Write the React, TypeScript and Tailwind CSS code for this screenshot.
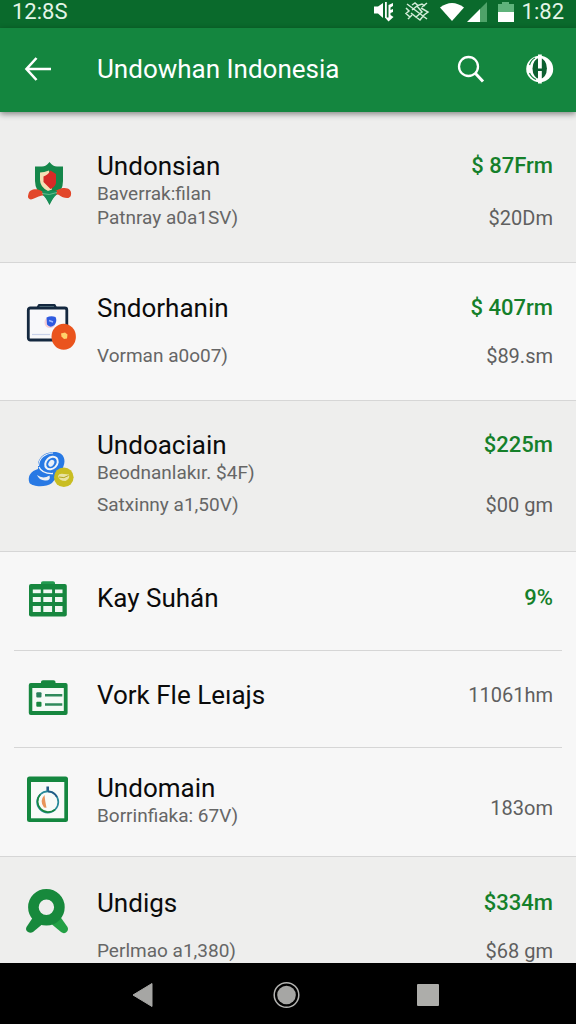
import type { ReactNode } from 'react';
import { clsx } from 'clsx';

type Item = {
  title: string;
  lines: string[];
  amount?: string;
  detail?: string;
  icon: ReactNode;
  // vertical rhythm of the row
  row: string;
  iconClass?: string;
  linesClass?: string;
  sideClass?: string;
  shaded?: boolean;
  inset?: boolean;
};

const iconBox = 'h-12 w-12 shrink-0 overflow-visible';

function ShieldIcon() {
  return (
    <svg viewBox="0 0 48 48" className={iconBox} aria-hidden="true">
      <path d="M25.5 4 Q29 8.500 33 8.500 L39 8.500 V23 Q39 34 30 38.500 L25.500 47 L21 38.500 Q11 34 11 23 V8.500 L18 8.500 Q22 8.500 25.500 4Z" fill="#14864a" />
      <path d="M25 12.500 Q20 14.500 16 14.500 V22 Q16 29 24 33 L28 31.500 Z" fill="#f5dfb6" />
      <path d="M26.500 12.500 L32 16 V25 Q31 29 26.500 31 L19.500 24 V18.500 Q24 17 26.500 12.500Z" fill="#d62a26" />
      <path d="M4.500 36 C5 32 10 30.500 14 31.500 C18 32.500 20 35.500 25 35 C30 34.500 31 32.500 37 30.500 C44 29 48 32 47 37 C46 42 39 40 35 37 C30 34.500 22 37.500 18 37.500 C13 38.500 10 41 7 41.500 C4 41 3.500 39 4.500 36Z" fill="#e2472b" />
      <path d="M18 33 H33 L31.500 37.500 L25.500 45 L19.500 37.500Z" fill="#17905a" />
      <path d="M18 35.500 Q25 38 33 34.500" fill="none" stroke="#7ec69d" strokeWidth="0.8" />
    </svg>
  );
}

function CaseIcon() {
  return (
    <svg viewBox="0 0 48 48" className={iconBox} aria-hidden="true">
      <path d="M13.500 4 L15 1 H30.500 L32 4" fill="#7fa0a8" stroke="#14283f" strokeWidth="2.2" strokeLinejoin="round" />
      <rect x="4.300" y="4" width="38.500" height="32" rx="2" fill="#f8f8fa" stroke="#14283f" strokeWidth="2.8" />
      <path d="M8 30.500 H26" stroke="#c9d2ea" strokeWidth="1.200" />
      <circle cx="26" cy="18.500" r="5.500" fill="#f6cfd6" />
      <path d="M22.500 13.500 Q27 11.500 31.500 13 Q33.500 17 30.500 21 Q26 24.500 23 20.500Z" fill="#2f5be0" />
      <path d="M25 16.500 l4 1.500" stroke="#9db8ff" strokeWidth="1.500" />
      <ellipse cx="39.700" cy="32.800" rx="12.200" ry="13" fill="#ea541d" />
      <path d="M37 29.500 L41 28.500 L43.500 30.500 L43 34.500 L40 35 L37.500 32.500Z" fill="#ffd36b" />
    </svg>
  );
}

function RingsIcon() {
  return (
    <svg viewBox="0 0 48 48" className={iconBox} aria-hidden="true">
      <path d="M14 14 C16 6 23 2.500 32 3 C40 4 42 11 39.500 17 C38 24 33 28 28 34 C22 38.500 9 38 5.500 34 C3 27 7 22 14 20Z" fill="#2879e4" />
      <path d="M14.500 17 C15 9 21 4.500 29 4" fill="none" stroke="#f2f4f7" strokeWidth="1.100" />
      <ellipse cx="27.500" cy="14" rx="7" ry="5.500" transform="rotate(-45 27.500 14)" fill="#2879e4" stroke="#f2f4f7" strokeWidth="2" />
      <ellipse cx="27.300" cy="14.300" rx="2.600" ry="3.600" transform="rotate(35 27.300 14.300)" fill="#e8eef7" />
      <path d="M15 18 Q18 25 29 24.500" fill="none" stroke="#f2f4f7" strokeWidth="1.300" />
      <path d="M13 26 Q19 30.500 25.500 26.500 Q27 32 21 31.500 Q15 31 13 26Z" fill="#eef1f4" />
      <circle cx="39.800" cy="28.300" r="9.800" fill="#c9bd22" />
      <path d="M34 27 Q35 24 40 25 L45 25.500 Q46 30 41.500 32 Q35 32 34 27Z" fill="#e9e3a2" />
      <path d="M35 28 Q40 30 44.500 26.500" fill="none" stroke="#b2a51c" strokeWidth="1" />
    </svg>
  );
}

function TableIcon() {
  return (
    <svg viewBox="0 0 48 48" className={iconBox} aria-hidden="true">
      <path d="M17 11 V9 Q17 7.300 19 7.300 H29 Q31 7.300 31 9 V11Z" fill="#239a50" />
      <rect x="5" y="10" width="37.800" height="32.500" rx="2" fill="#17873f" />
      {[
        [15.5, 3.7],
        [23, 5],
        [32, 6],
      ].map(([y, h]) => (
        <g key={y} fill="#f1f8f2">
          <rect x="8.800" y={y} width="8" height={h} />
          <rect x="19.300" y={y} width="8.800" height={h} />
          <rect x="31" y={y} width="7.500" height={h} />
        </g>
      ))}
    </svg>
  );
}

function ChecklistIcon() {
  return (
    <svg viewBox="0 0 48 48" className={iconBox} aria-hidden="true">
      <path d="M17 13 V11 Q17 9.200 19 9.200 H29.500 Q31.500 9.200 31.500 11 V13Z" fill="#17873f" />
      <rect x="4.800" y="12" width="38.800" height="32" rx="2" fill="#17873f" />
      <rect x="8.300" y="17" width="31.500" height="23" fill="#f5faf6" />
      <rect x="12.300" y="21.300" width="5.200" height="5.200" rx="1" fill="#2a7f5c" />
      <rect x="12.300" y="30.800" width="5.200" height="5" rx="1" fill="#17873f" />
      <path d="M21 24.300 H38.300 M21 33.500 H38.300" stroke="#2f8a5b" strokeWidth="2.600" />
    </svg>
  );
}

function FrameIcon() {
  return (
    <svg viewBox="0 0 48 48" className={iconBox} aria-hidden="true">
      <rect x="3" y="0.500" width="41" height="45.500" rx="2.500" fill="#14873f" />
      <rect x="7" y="6" width="33.300" height="36.300" fill="#f8faf8" />
      <path d="M23.700 10.500 V15.500" stroke="#245a86" strokeWidth="2.600" />
      <circle cx="23.700" cy="26" r="10.600" fill="none" stroke="#27899a" strokeWidth="1.700" />
      <path d="M16.200 18.500 A10.600 10.600 0 0 0 31 33.600" fill="none" stroke="#17873f" strokeWidth="1.700" />
      <path d="M23.700 15.400 A10.600 10.600 0 0 1 33 21" fill="none" stroke="#245a86" strokeWidth="1.700" />
      <path d="M20.500 19 Q15 25 20 31.500 L22.500 31.800 Q21 25 20.500 19Z" fill="#e8935a" />
    </svg>
  );
}

function PersonIcon() {
  return (
    <svg viewBox="0 0 48 48" className={iconBox} aria-hidden="true">
      <path d="M10.500 28 L2.500 40 Q1 43 4 45 Q6.500 46.500 9 45 L18 37.500Z" fill="#17893c" />
      <path d="M35 28 L43.500 40 Q45 43 42 45.500 Q39.500 47 37 45 L28 37.500Z" fill="#23a045" />
      <circle cx="22.400" cy="20.300" r="13" fill="none" stroke="#17893c" strokeWidth="10.600" />
    </svg>
  );
}

const items: Item[] = [
  {
    title: 'Undonsian',
    lines: ['Baverrak:filan', 'Patnray a0a1SV)'],
    amount: '$ 87Frm',
    detail: '$20Dm',
    icon: <ShieldIcon />,
    row: 'pt-[38px] pb-8',
    iconClass: 'self-start pt-2',
    shaded: true,
  },
  {
    title: 'Sndorhanin',
    lines: ['Vorman a0o07)'],
    amount: '$ 407rm',
    detail: '$89.sm',
    icon: <CaseIcon />,
    row: 'pt-[29px] pb-8',
    iconClass: 'self-start pt-3',
    linesClass: 'pt-5',
  },
  {
    title: 'Undoaciain',
    lines: ['Beodnanlakır. $4F)', 'Satxinny a1,50V)'],
    amount: '$225m',
    detail: '$00 gm',
    icon: <RingsIcon />,
    row: 'pt-7 pb-[34px]',
    linesClass: 'gap-2',
    shaded: true,
  },
  {
    title: 'Kay Suhán',
    lines: [],
    amount: '9%',
    icon: <TableIcon />,
    row: 'pt-[22px] pb-7',
    inset: true,
  },
  {
    title: 'Vork Fle Leıajs',
    lines: [],
    detail: '11061hm',
    icon: <ChecklistIcon />,
    row: 'pt-5 pb-7',
    inset: true,
  },
  {
    title: 'Undomain',
    lines: ['Borrinfiaka: 67V)'],
    detail: '183om',
    icon: <FrameIcon />,
    row: 'pt-6 pb-7',
    sideClass: 'pb-2',
  },
  {
    title: 'Undigs',
    lines: ['Perlmao a1,380)'],
    amount: '$334m',
    detail: '$68 gm',
    icon: <PersonIcon />,
    row: 'pt-[30px] pb-8',
    iconClass: 'self-start',
    linesClass: 'pt-5',
    shaded: true,
  },
];

function StatusBar() {
  return (
    <div className="flex h-7 shrink-0 items-center justify-between bg-[#0a6a2c] px-3 pb-1 text-[22px] leading-6 text-[#e4f5e8]">
      <span>12:8S</span>
      <div className="flex items-center">
        <svg viewBox="0 0 140 24" className="mr-2 h-6 w-[140px]" aria-hidden="true">
          {/* muted speaker */}
          <path d="M0 6.500 H4 L9 3 V18 L4 13.500 H0Z M11 2 h1.800 v16 h-1.800Z M14.500 5 L19 3 V6 L16.500 7.500 V10 L19 9 V12 L16.500 13 V15 L19.500 17 L14.500 21.500 L11 17.500 H14.500Z" fill="#fff" />
          {/* vibrate off */}
          <path
            d="M33 4 L53 19 M32 8 L35 11 L32 13.500 L36 17 M38 5 L41 3 L44 5.500 L48 4 L51 6 M47 8 L54 12 L50 15 L46 20 L42 17 M38 10 L43 6 L48 12 L42 17 L37 13 M34 19 L38 15 M48 7 L53 3"
            fill="none"
            stroke="#d3ecd9"
            strokeWidth="1.500"
          />
          <path d="M66 7.500 Q78 -1.500 90 7.500 L78 21Z" fill="#fff" />
          <path d="M113 2 V22 H106 V9Z" fill="#4fa269" />
          <path d="M106 9 V22 H93Z" fill="#fff" />
          <path d="M128 2 H135 V4 H140 V12 H124 V4 H128Z" fill="#5fb37b" />
          <path d="M124 12 H140 V22 H124Z" fill="#fff" />
        </svg>
        <span>1:82</span>
      </div>
    </div>
  );
}

function AppBar() {
  return (
    <header className="relative z-10 flex h-[84px] shrink-0 items-center bg-[#14863f] pr-5 pb-0.5 pl-[22px] text-white shadow-[0_2px_6px_rgba(0,0,0,0.45)]">
      <button type="button" aria-label="Back" className="mr-[43px]">
        <svg viewBox="0 0 32 32" className="h-8 w-8" fill="none" stroke="currentColor" strokeWidth="2.600">
          <path d="M29 16 H5 M14.500 5 L4.500 16 L14.500 27" />
        </svg>
      </button>
      <h1 className="flex-1 text-[26px] leading-8">Undowhan Indonesia</h1>
      <button type="button" aria-label="Search" className="mr-[37px]">
        <svg viewBox="0 0 32 32" className="h-8 w-8" fill="none" stroke="currentColor">
          <circle cx="13.500" cy="13.500" r="9.500" strokeWidth="2.300" />
          <path d="M20 20 L28 28.500" strokeWidth="3" />
        </svg>
      </button>
      <button type="button" aria-label="Language">
        <svg viewBox="0 0 32 32" className="h-8 w-8">
          <ellipse cx="15.700" cy="16" rx="13.500" ry="13.200" fill="#fff" />
          <ellipse cx="15.700" cy="15.500" rx="7.200" ry="10.500" fill="#0c5f30" />
          <path d="M5.500 12 Q7 7 11 5 M5.500 20 Q7 24 12 26.500" fill="none" stroke="#14863f" strokeWidth="1.200" />
          <path d="M14 1.500 H17.800 V15.500 H14Z M14 18 H17.800 V30.500 H14Z" fill="#fff" />
        </svg>
      </button>
    </header>
  );
}

function Row({ item }: { item: Item }) {
  return (
    <li className={item.shaded ? 'bg-[#eeeeed]' : 'bg-[#f7f7f7]'}>
      <div className={clsx('flex items-center pr-[23px] pl-6', item.row)}>
        <div className={clsx('mr-[25px]', item.iconClass)}>{item.icon}</div>
        <div className="min-w-0 flex-1">
          <h2 className="text-[26px] leading-8 text-[#0b0b0b]">{item.title}</h2>
          {item.lines.length > 0 && (
            <div className={clsx('flex flex-col', item.linesClass)}>
              {item.lines.map((line) => (
                <p key={line} className="text-[19px] leading-6 text-[#666666]">
                  {line}
                </p>
              ))}
            </div>
          )}
        </div>
        <div
          className={clsx(
            'flex flex-col text-right',
            item.lines.length > 0 && 'self-stretch',
            item.amount ? 'justify-between' : 'justify-end',
            item.sideClass,
          )}
        >
          {item.amount && <span className="text-[22px] leading-8 font-medium text-[#15802a]">{item.amount}</span>}
          {item.detail && <span className="text-[20px] leading-6 text-[#5f5f5f]">{item.detail}</span>}
        </div>
      </div>
      <div className={clsx('h-px bg-[#d6d6d6]', item.inset && 'mx-3.5')} />
    </li>
  );
}

function NavBar() {
  return (
    <nav className="grid h-[61px] shrink-0 grid-cols-3 items-center justify-items-center bg-black pt-0.5 pr-[76px] pl-18">
      <button type="button" aria-label="Back">
        <svg viewBox="0 0 32 32" className="h-8 w-8">
          <path d="M6 16 L25 4.500 V27.500Z" fill="#a6a6a4" stroke="#a6a6a4" strokeLinejoin="round" />
        </svg>
      </button>
      <button type="button" aria-label="Home">
        <svg viewBox="0 0 32 32" className="h-8 w-8">
          <circle cx="16.500" cy="16" r="12.300" fill="none" stroke="#b4b4b2" strokeWidth="1.500" />
          <circle cx="16.500" cy="16" r="9.300" fill="#a6a6a4" />
        </svg>
      </button>
      <button type="button" aria-label="Recent apps">
        <svg viewBox="0 0 32 32" className="h-8 w-8">
          <rect x="4" y="5" width="22" height="22" rx="1" fill="#adadaa" />
        </svg>
      </button>
    </nav>
  );
}

export default function App() {
  return (
    <div className="flex h-screen flex-col overflow-hidden bg-[#eeeeed] font-[Roboto,sans-serif]">
      <StatusBar />
      <AppBar />
      <main className="min-h-0 flex-1 overflow-hidden">
        <ul className="bg-[#f7f7f7]">
          {items.map((item) => (
            <Row key={item.title} item={item} />
          ))}
        </ul>
      </main>
      <NavBar />
    </div>
  );
}
